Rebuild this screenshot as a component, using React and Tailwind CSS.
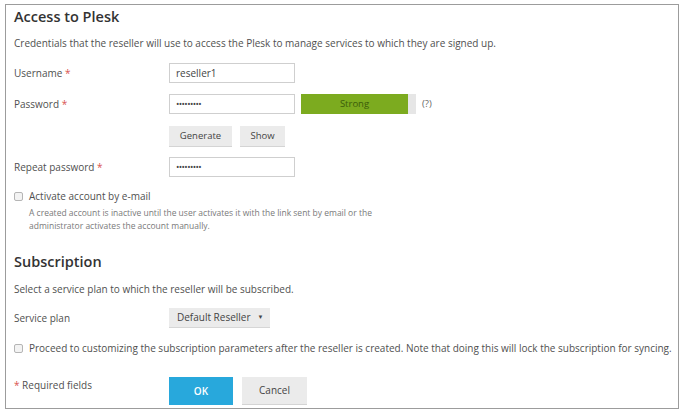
import React from "react";

const font = { fontFamily: '"Open Sans", "Noto Sans", sans-serif' };

function Req() {
  return <span className="text-[#d9534f]"> *</span>;
}

function Checkbox() {
  return (
    <span className="inline-block w-[9px] h-[9px] border border-[#b5b5b5] rounded-[2px] bg-[#f3f3f3] shrink-0" />
  );
}

function Btn({ children, w }) {
  return (
    <div
      className={`h-[21px] ${w} flex items-center justify-center bg-[#ebebeb] border-b border-[#d4d4d4] text-[9.5px] text-[#444]`}
    >
      {children}
    </div>
  );
}

export default function App() {
  return (
    <div className="w-[683px] h-[413px] bg-white overflow-hidden text-[#505050]" style={font}>
      <div className="ml-[5px] mt-[4px] w-[674px] h-[405px] border border-[#9c9c9c] pl-[8px] flex flex-col">
        <div className="h-[20px] mt-[2px] flex items-center text-[14.5px] font-semibold text-[#333]">
          Access to Plesk
        </div>
        <div className="h-[14px] mt-[9px] flex items-center text-[10px]">
          Credentials that the reseller will use to access the Plesk to manage services to which they are signed up.
        </div>
        <div className="flex items-center h-[20px] mt-[13px]">
          <div className="w-[155px] text-[10px]">Username<Req /></div>
          <div className="w-[126px] h-[20px] border border-[#cfcfcf] flex items-center px-[6px] text-[10px] text-[#444]">
            reseller1
          </div>
        </div>
        <div className="flex items-center h-[20px] mt-[11px]">
          <div className="w-[155px] text-[10px]">Password<Req /></div>
          <div className="w-[126px] h-[20px] border border-[#cfcfcf] flex items-center px-[6px] text-[9px] tracking-[-0.6px] text-[#444]">
            •••••••••
          </div>
          <div className="ml-[6px] w-[115px] h-[20px] bg-[#e6e6e6] flex">
            <div className="w-[107px] h-full bg-[#7cab1f] flex items-center justify-center text-[9.5px] text-[#3b5c0a]">
              Strong
            </div>
          </div>
          <div className="ml-[6px] text-[9.5px] text-[#666]">(?)</div>
        </div>
        <div className="flex items-center h-[21px] mt-[12px] pl-[155px] gap-[8px]">
          <Btn w="w-[63px]">Generate</Btn>
          <Btn w="w-[45px]">Show</Btn>
        </div>
        <div className="flex items-center h-[20px] mt-[10px]">
          <div className="w-[155px] text-[10px]">Repeat password<Req /></div>
          <div className="w-[126px] h-[20px] border border-[#cfcfcf] flex items-center px-[6px] text-[9px] tracking-[-0.6px] text-[#444]">
            •••••••••
          </div>
        </div>
        <div className="flex items-center h-[14px] mt-[12px] gap-[6px]">
          <Checkbox />
          <span className="text-[10px]">Activate account by e-mail</span>
        </div>
        <div className="pl-[15px] mt-[3px] text-[8.5px] leading-[13px] text-[#7a7a7a]">
          <div>A created account is inactive until the user activates it with the link sent by email or the</div>
          <div>administrator activates the account manually.</div>
        </div>
        <div className="h-[20px] mt-[20px] flex items-center text-[14.5px] font-semibold text-[#333]">
          Subscription
        </div>
        <div className="h-[14px] mt-[10px] flex items-center text-[10px]">
          Select a service plan to which the reseller will be subscribed.
        </div>
        <div className="flex items-center h-[20px] mt-[12px]">
          <div className="w-[155px] text-[10px]">Service plan</div>
          <div className="w-[101px] h-[20px] bg-[#ebebeb] border-b border-[#d6d6d6] flex items-center pl-[8px] text-[10px] text-[#444] whitespace-nowrap">
            Default Reseller
            <span className="ml-[7px] text-[6px]">▼</span>
          </div>
        </div>
        <div className="flex items-center h-[14px] mt-[13px] gap-[6px] whitespace-nowrap">
          <Checkbox />
          <span className="text-[10px]">
            Proceed to customizing the subscription parameters after the reseller is created. Note that doing this will lock the subscription for syncing.
          </span>
        </div>
        <div className="flex items-start mt-[22px]">
          <div className="w-[155px] text-[10px] mt-[1px]">
            <span className="text-[#d9534f]">*</span> Required fields
          </div>
          <div className="w-[64px] h-[28px] bg-[#28a8dc] flex items-center justify-center text-[10px] font-semibold text-white">
            OK
          </div>
          <div className="ml-[9px] w-[65px] h-[28px] bg-[#ebebeb] border-b border-[#d4d4d4] flex items-center justify-center text-[10px] text-[#444]">
            Cancel
          </div>
        </div>
      </div>
    </div>
  );
}
